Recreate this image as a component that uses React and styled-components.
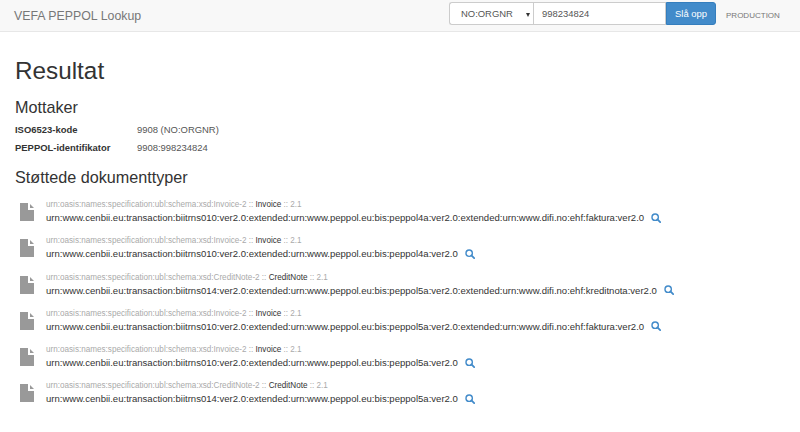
import React from 'react';
import styled, { createGlobalStyle } from 'styled-components';

const GlobalStyle = createGlobalStyle`
html, body { margin: 0; padding: 0; background: #fff; }
body { font-family: "Liberation Sans", Arial, sans-serif; color: #333; overflow: hidden; }
* { box-sizing: border-box; }
`;

const Navbar = styled.nav`
display: flex;
align-items: center;
height: 32px;
padding: 0 20px 0 14px;
background: #f8f8f8;
border-bottom: 1px solid #e7e7e7;
`;

const Brand = styled.div`
font-size: 12.35px;
color: #777;
margin-right: auto;
`;

const SearchForm = styled.form`
display: flex;
height: 23px;
margin: 0 0 4px;
`;

const TypeSelect = styled.div`
position: relative;
width: 84px;
padding-left: 11px;
font-size: 9.45px;
line-height: 21px;
color: #555;
background: #fff;
border: 1px solid #ccc;
border-right: 0;
border-radius: 3px 0 0 3px;
`;

const Caret = styled.span`
position: absolute;
right: 3px;
top: 10px;
border-top: 4px solid #333;
border-left: 2px solid transparent;
border-right: 2px solid transparent;
`;

const NumberInput = styled.div`
width: 133px;
padding-left: 8px;
font-size: 9.45px;
line-height: 21px;
color: #555;
background: #fff;
border: 1px solid #ccc;
`;

const Submit = styled.button`
width: 50px;
padding: 0;
font: 9.45px "Liberation Sans", Arial, sans-serif;
color: #fff;
background: #428bca;
border: 1px solid #357ebd;
border-radius: 0 3px 3px 0;
`;

const EnvLabel = styled.span`
margin: 0 0 0 10px;
width: 54px;
font-size: 8.03px;
color: #777;
`;

const Page = styled.main`
padding: 0 15px;
`;

const Title = styled.h1`
margin: 24px 0 12px;
font-size: 24.3px;
line-height: 30px;
font-weight: 400;
`;

const Heading = styled.h2`
margin: 0;
font-size: 16.2px;
line-height: 18px;
font-weight: 400;
`;

const Facts = styled.dl`
margin: 8px 0 14px;
display: grid;
grid-template-columns: 122px 1fr;
row-gap: 6px;
font-size: 9.45px;
line-height: 12px;
dt { font-weight: 700; }
dd { margin: 0; color: #555; }
`;

const DocList = styled.ul`
list-style: none;
margin: 13px 0 0;
padding: 0;
`;

const DocRow = styled.li`
display: flex;
height: 36.3px;
padding-left: 5px;
`;

const FileBadge = styled.svg`
width: 14px;
height: 18px;
margin: 4px 12px 0 0;
flex: none;
`;

const DocText = styled.div`
font-size: 8.13px;
line-height: 11px;
`;

const DocType = styled.div`
color: #aaa;
b { font-weight: 400; color: #333; }
`;

const ProcessLine = styled.div`
display: flex;
align-items: center;
margin-top: 1px;
font-size: 9.55px;
line-height: 13px;
color: #333;
`;

const Lens = styled.svg`
width: 10px;
height: 10px;
margin-left: 7px;
`;

const docs = [
  ['Invoice-2', 'Invoice', '010', 'peppol4a', 'urn:www.difi.no:ehf:faktura:ver2.0'],
  ['Invoice-2', 'Invoice', '010', 'peppol4a', null],
  ['CreditNote-2', 'CreditNote', '014', 'peppol5a', 'urn:www.difi.no:ehf:kreditnota:ver2.0'],
  ['Invoice-2', 'Invoice', '010', 'peppol5a', 'urn:www.difi.no:ehf:faktura:ver2.0'],
  ['Invoice-2', 'Invoice', '010', 'peppol5a', null],
  ['CreditNote-2', 'CreditNote', '014', 'peppol5a', null],
];

const processId = (trans, bis, ext) =>
  `urn:www.cenbii.eu:transaction:biitrns${trans}:ver2.0:extended:urn:www.peppol.eu:bis:${bis}:ver2.0` +
  (ext ? `:extended:${ext}` : '');

export default function App() {
  return (
    <>
      <GlobalStyle />
      <Navbar>
        <Brand>VEFA PEPPOL Lookup</Brand>
        <SearchForm onSubmit={e => e.preventDefault()}>
          <TypeSelect>NO:ORGNR<Caret /></TypeSelect>
          <NumberInput>998234824</NumberInput>
          <Submit type="submit">Slå opp</Submit>
        </SearchForm>
        <EnvLabel>PRODUCTION</EnvLabel>
      </Navbar>
      <Page>
        <Title>Resultat</Title>
        <Heading>Mottaker</Heading>
        <Facts>
          <dt>ISO6523-kode</dt>
          <dd>9908 (NO:ORGNR)</dd>
          <dt>PEPPOL-identifikator</dt>
          <dd>9908:998234824</dd>
        </Facts>
        <Heading>Støttede dokumenttyper</Heading>
        <DocList>
          {docs.map(([schema, name, trans, bis, ext], i) => (
            <DocRow key={i}>
              <FileBadge viewBox="0 0 14 18">
                <path d="M0 0h8v7h6v11H0z" fill="#999" />
                <path d="M10 1l4 4h-4z" fill="#999" />
              </FileBadge>
              <DocText>
                <DocType>
                  urn:oasis:names:specification:ubl:schema:xsd:{schema} :: <b>{name}</b> :: 2.1
                </DocType>
                <ProcessLine>
                  {processId(trans, bis, ext)}
                  <Lens viewBox="0 0 12 12">
                    <circle cx="5" cy="5" r="3.8" fill="none" stroke="#428bca" strokeWidth="1.7" />
                    <path d="M7.7 7.7L11 11" stroke="#428bca" strokeWidth="2.1" strokeLinecap="round" />
                  </Lens>
                </ProcessLine>
              </DocText>
            </DocRow>
          ))}
        </DocList>
      </Page>
    </>
  );
}
